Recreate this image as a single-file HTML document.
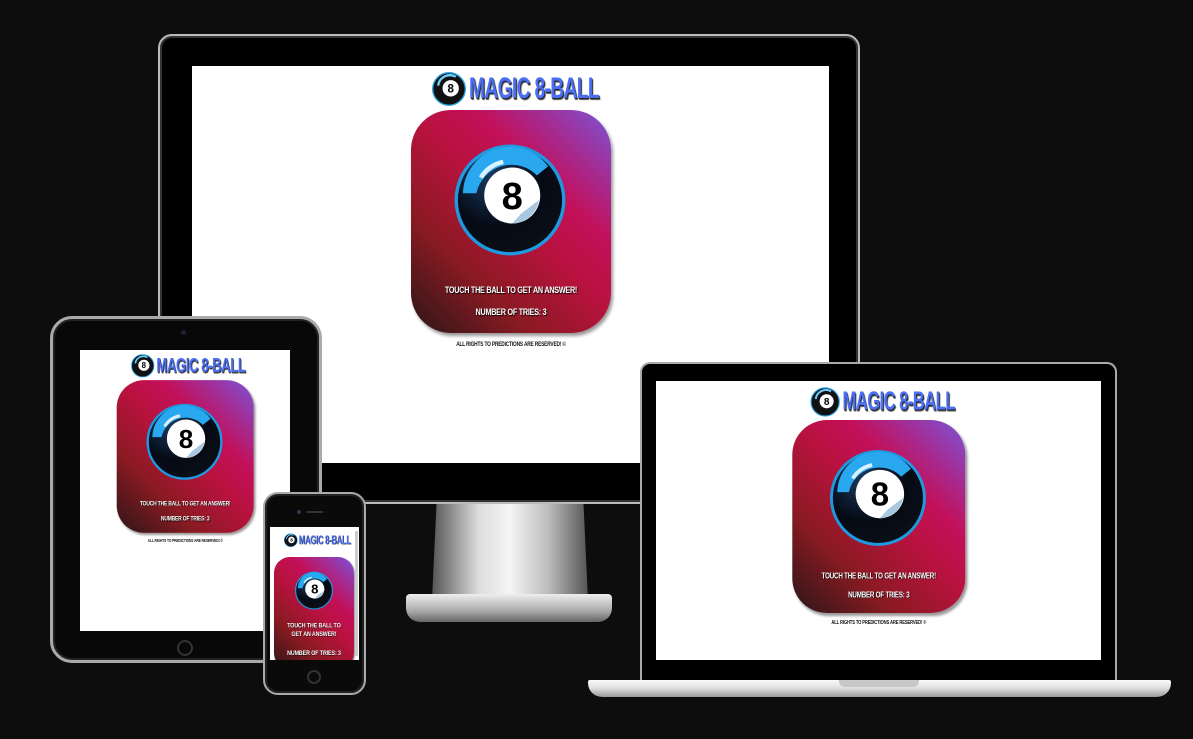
<!DOCTYPE html>
<html><head><meta charset="utf-8"><style>
*{margin:0;padding:0;box-sizing:border-box}
body{width:1193px;height:739px;background:#0e0d0e;position:relative;overflow:hidden;font-family:"Liberation Sans Narrow","Liberation Sans",sans-serif}
.abs{position:absolute}
.scr{position:absolute;background:#fff;overflow:hidden}
.app{position:absolute;width:240px;height:300px;transform-origin:0 0}
.logo{position:absolute;top:6px;left:41px;height:34px;width:162px}
.logo svg{position:absolute;left:0;top:0;width:34px;height:34px}
.logo span{position:absolute;left:37px;top:0;font-weight:bold;font-size:30px;line-height:34px;color:#4a6ff5;letter-spacing:-1px;text-shadow:1px 1px 0 #222,2px 2px 1px #555;transform:scaleX(.64);transform-origin:0 50%;white-space:nowrap}
.card{position:absolute;left:20px;top:44px;width:200px;height:223px;border-radius:40px;background:linear-gradient(45deg,#2a1618 0%,#8a1a22 28%,#b8123e 52%,#c3105a 68%,#a0309a 84%,#7a55d8 100%);box-shadow:2px 3px 3px #999}
.card svg{position:absolute;left:43px;top:34px;width:112px;height:112px}
.t{position:absolute;left:0;width:100%;text-align:center;color:#fff;font-weight:bold;font-size:9px;text-shadow:1px 1px 1px #000;letter-spacing:-.3px;transform:scaleX(.8)}
.foot{position:absolute;top:276px;left:0;width:100%;text-align:center;font-size:6px;color:#111;font-weight:bold;letter-spacing:-.2px;transform:scaleX(.8)}
</style></head><body>

<div class="abs" style="left:432px;top:500px;width:156px;height:100px;background:linear-gradient(90deg,#555,#ddd 30%,#f5f5f5 50%,#bbb 75%,#555);clip-path:polygon(3% 0,97% 0,100% 100%,0 100%)"></div>
<div class="abs" style="left:406px;top:594px;width:206px;height:28px;border-radius:4px 4px 14px 14px;background:linear-gradient(#eee,#aaa 60%,#666)"></div>
<div class="abs" style="left:158px;top:34px;width:702px;height:470px;border-radius:14px;background:#000;border:2px solid #bbb;box-shadow:inset 0 0 0 2px #333"></div>
<div class="scr" style="left:192px;top:66px;width:637px;height:397px"></div>

<div class="abs" style="left:50px;top:316px;width:272px;height:347px;border-radius:22px;background:#080808;border:3px solid #aaa;box-shadow:inset 0 0 0 2px #222"></div>
<div class="abs" style="left:181px;top:330px;width:5px;height:5px;border-radius:50%;background:#223"></div>
<div class="abs" style="left:177px;top:640px;width:16px;height:16px;border-radius:50%;border:2px solid #333"></div>
<div class="scr" style="left:80px;top:350px;width:210px;height:281px"></div>

<div class="abs" style="left:263px;top:492px;width:103px;height:203px;border-radius:15px;background:#0a0a0a;border:2px solid #aaa;box-shadow:inset 0 0 0 2px #222"></div>
<div class="abs" style="left:307px;top:670px;width:14px;height:14px;border-radius:50%;border:2px solid #333"></div>
<div class="abs" style="left:297px;top:510px;width:4px;height:4px;border-radius:50%;background:#335"></div>
<div class="abs" style="left:307px;top:511px;width:16px;height:2px;background:#333"></div>
<div class="scr" style="left:270px;top:527px;width:89px;height:133px"></div>

<div class="abs" style="left:640px;top:362px;width:477px;height:320px;border-radius:10px 10px 0 0;background:#000;border:2px solid #aaa;border-bottom:none"></div>
<div class="scr" style="left:656px;top:381px;width:445px;height:279px"></div>
<div class="abs" style="left:588px;top:680px;width:583px;height:17px;border-radius:2px 2px 14px 14px;background:linear-gradient(#fafafa,#ddd 50%,#999)"></div>
<div class="abs" style="left:839px;top:680px;width:80px;height:7px;border-radius:0 0 6px 6px;background:#c8c8c8"></div>

<div class="app" style="left:391px;top:66px;transform:scale(1)">
 <div class="logo"><svg viewBox="0 0 100 100"><circle cx="50" cy="50" r="48" fill="#111" stroke="#2aa4e6" stroke-width="4"/><path d="M18 40 A35 35 0 0 1 70 14" stroke="#6cd0ff" stroke-width="7" fill="none"/><circle cx="55" cy="48" r="24" fill="#fff"/><text x="55" y="60" font-size="34" font-weight="bold" text-anchor="middle" font-family="Liberation Sans">8</text></svg><span>MAGIC 8-BALL</span></div>
 <div class="card"><svg viewBox="0 0 100 100"><defs><radialGradient id="g" cx=".35" cy=".3" r=".75"><stop offset="0" stop-color="#1a3a60"/><stop offset=".6" stop-color="#050a14"/><stop offset="1" stop-color="#0a0f18"/></radialGradient></defs><circle cx="50" cy="50" r="48" fill="url(#g)" stroke="#1e9ae0" stroke-width="3"/><path d="M8 44 A42 42 0 0 1 84 20 L74 28 A32 32 0 0 0 20 44Z" fill="#29a8f0"/><path d="M24 30 A30 30 0 0 1 44 16" stroke="#d8f2ff" stroke-width="4" fill="none"/><circle cx="52" cy="46" r="25" fill="#fff"/><path d="M52 71 A25 25 0 0 0 76 50 L60 62Z" fill="#a8c8e0"/><text x="52" y="58" font-size="34" font-weight="bold" text-anchor="middle" font-family="Liberation Sans">8</text></svg>
 <div class="t" style="top:175px">TOUCH THE BALL TO GET AN ANSWER!</div><div class="t" style="top:197px">NUMBER OF TRIES: 3</div></div>
 <div class="foot">ALL RIGHTS TO PREDICTIONS ARE RESERVED! ©</div>
</div>

<div class="app" style="left:103px;top:350px;transform:scale(.685)">
 <div class="logo"><svg viewBox="0 0 100 100"><circle cx="50" cy="50" r="48" fill="#111" stroke="#2aa4e6" stroke-width="4"/><path d="M18 40 A35 35 0 0 1 70 14" stroke="#6cd0ff" stroke-width="7" fill="none"/><circle cx="55" cy="48" r="24" fill="#fff"/><text x="55" y="60" font-size="34" font-weight="bold" text-anchor="middle" font-family="Liberation Sans">8</text></svg><span>MAGIC 8-BALL</span></div>
 <div class="card"><svg viewBox="0 0 100 100"><circle cx="50" cy="50" r="48" fill="url(#g)" stroke="#1e9ae0" stroke-width="3"/><path d="M8 44 A42 42 0 0 1 84 20 L74 28 A32 32 0 0 0 20 44Z" fill="#29a8f0"/><path d="M24 30 A30 30 0 0 1 44 16" stroke="#d8f2ff" stroke-width="4" fill="none"/><circle cx="52" cy="46" r="25" fill="#fff"/><path d="M52 71 A25 25 0 0 0 76 50 L60 62Z" fill="#a8c8e0"/><text x="52" y="58" font-size="34" font-weight="bold" text-anchor="middle" font-family="Liberation Sans">8</text></svg>
 <div class="t" style="top:175px">TOUCH THE BALL TO GET AN ANSWER!</div><div class="t" style="top:197px">NUMBER OF TRIES: 3</div></div>
 <div class="foot">ALL RIGHTS TO PREDICTIONS ARE RESERVED! ©</div>
</div>

<div class="app" style="left:775px;top:382px;transform:scale(.865)">
 <div class="logo"><svg viewBox="0 0 100 100"><circle cx="50" cy="50" r="48" fill="#111" stroke="#2aa4e6" stroke-width="4"/><path d="M18 40 A35 35 0 0 1 70 14" stroke="#6cd0ff" stroke-width="7" fill="none"/><circle cx="55" cy="48" r="24" fill="#fff"/><text x="55" y="60" font-size="34" font-weight="bold" text-anchor="middle" font-family="Liberation Sans">8</text></svg><span>MAGIC 8-BALL</span></div>
 <div class="card"><svg viewBox="0 0 100 100"><circle cx="50" cy="50" r="48" fill="url(#g)" stroke="#1e9ae0" stroke-width="3"/><path d="M8 44 A42 42 0 0 1 84 20 L74 28 A32 32 0 0 0 20 44Z" fill="#29a8f0"/><path d="M24 30 A30 30 0 0 1 44 16" stroke="#d8f2ff" stroke-width="4" fill="none"/><circle cx="52" cy="46" r="25" fill="#fff"/><path d="M52 71 A25 25 0 0 0 76 50 L60 62Z" fill="#a8c8e0"/><text x="52" y="58" font-size="34" font-weight="bold" text-anchor="middle" font-family="Liberation Sans">8</text></svg>
 <div class="t" style="top:175px">TOUCH THE BALL TO GET AN ANSWER!</div><div class="t" style="top:197px">NUMBER OF TRIES: 3</div></div>
 <div class="foot">ALL RIGHTS TO PREDICTIONS ARE RESERVED! ©</div>
</div>

<div class="scr" style="left:270px;top:527px;width:89px;height:133px;background:transparent">
 <div class="app" style="left:-4px;top:4px;transform:scale(.4)">
  <div class="logo" style="left:45px"><svg viewBox="0 0 100 100"><circle cx="50" cy="50" r="48" fill="#111" stroke="#2aa4e6" stroke-width="4"/><path d="M18 40 A35 35 0 0 1 70 14" stroke="#6cd0ff" stroke-width="7" fill="none"/><circle cx="55" cy="48" r="24" fill="#fff"/><text x="55" y="60" font-size="34" font-weight="bold" text-anchor="middle" font-family="Liberation Sans">8</text></svg><span>MAGIC 8-BALL</span></div>
  <div class="card" style="top:65px;height:280px"><svg viewBox="0 0 100 100" style="left:52px;top:36px;width:96px;height:96px"><circle cx="50" cy="50" r="48" fill="url(#g)" stroke="#1e9ae0" stroke-width="3"/><path d="M8 44 A42 42 0 0 1 84 20 L74 28 A32 32 0 0 0 20 44Z" fill="#29a8f0"/><path d="M24 30 A30 30 0 0 1 44 16" stroke="#d8f2ff" stroke-width="4" fill="none"/><circle cx="52" cy="46" r="25" fill="#fff"/><path d="M52 71 A25 25 0 0 0 76 50 L60 62Z" fill="#a8c8e0"/><text x="52" y="58" font-size="34" font-weight="bold" text-anchor="middle" font-family="Liberation Sans">8</text></svg>
  <div class="t" style="top:160px;font-size:17px;line-height:22px;padding:0 10px;transform:scaleX(.78)">TOUCH THE BALL TO GET AN ANSWER!</div><div class="t" style="top:230px;font-size:17px;transform:scaleX(.78)">NUMBER OF TRIES: 3</div></div>
 </div>
 <div class="abs" style="right:1px;top:4px;width:3px;height:125px;background:#ccc"></div>
</div>
</body></html>
